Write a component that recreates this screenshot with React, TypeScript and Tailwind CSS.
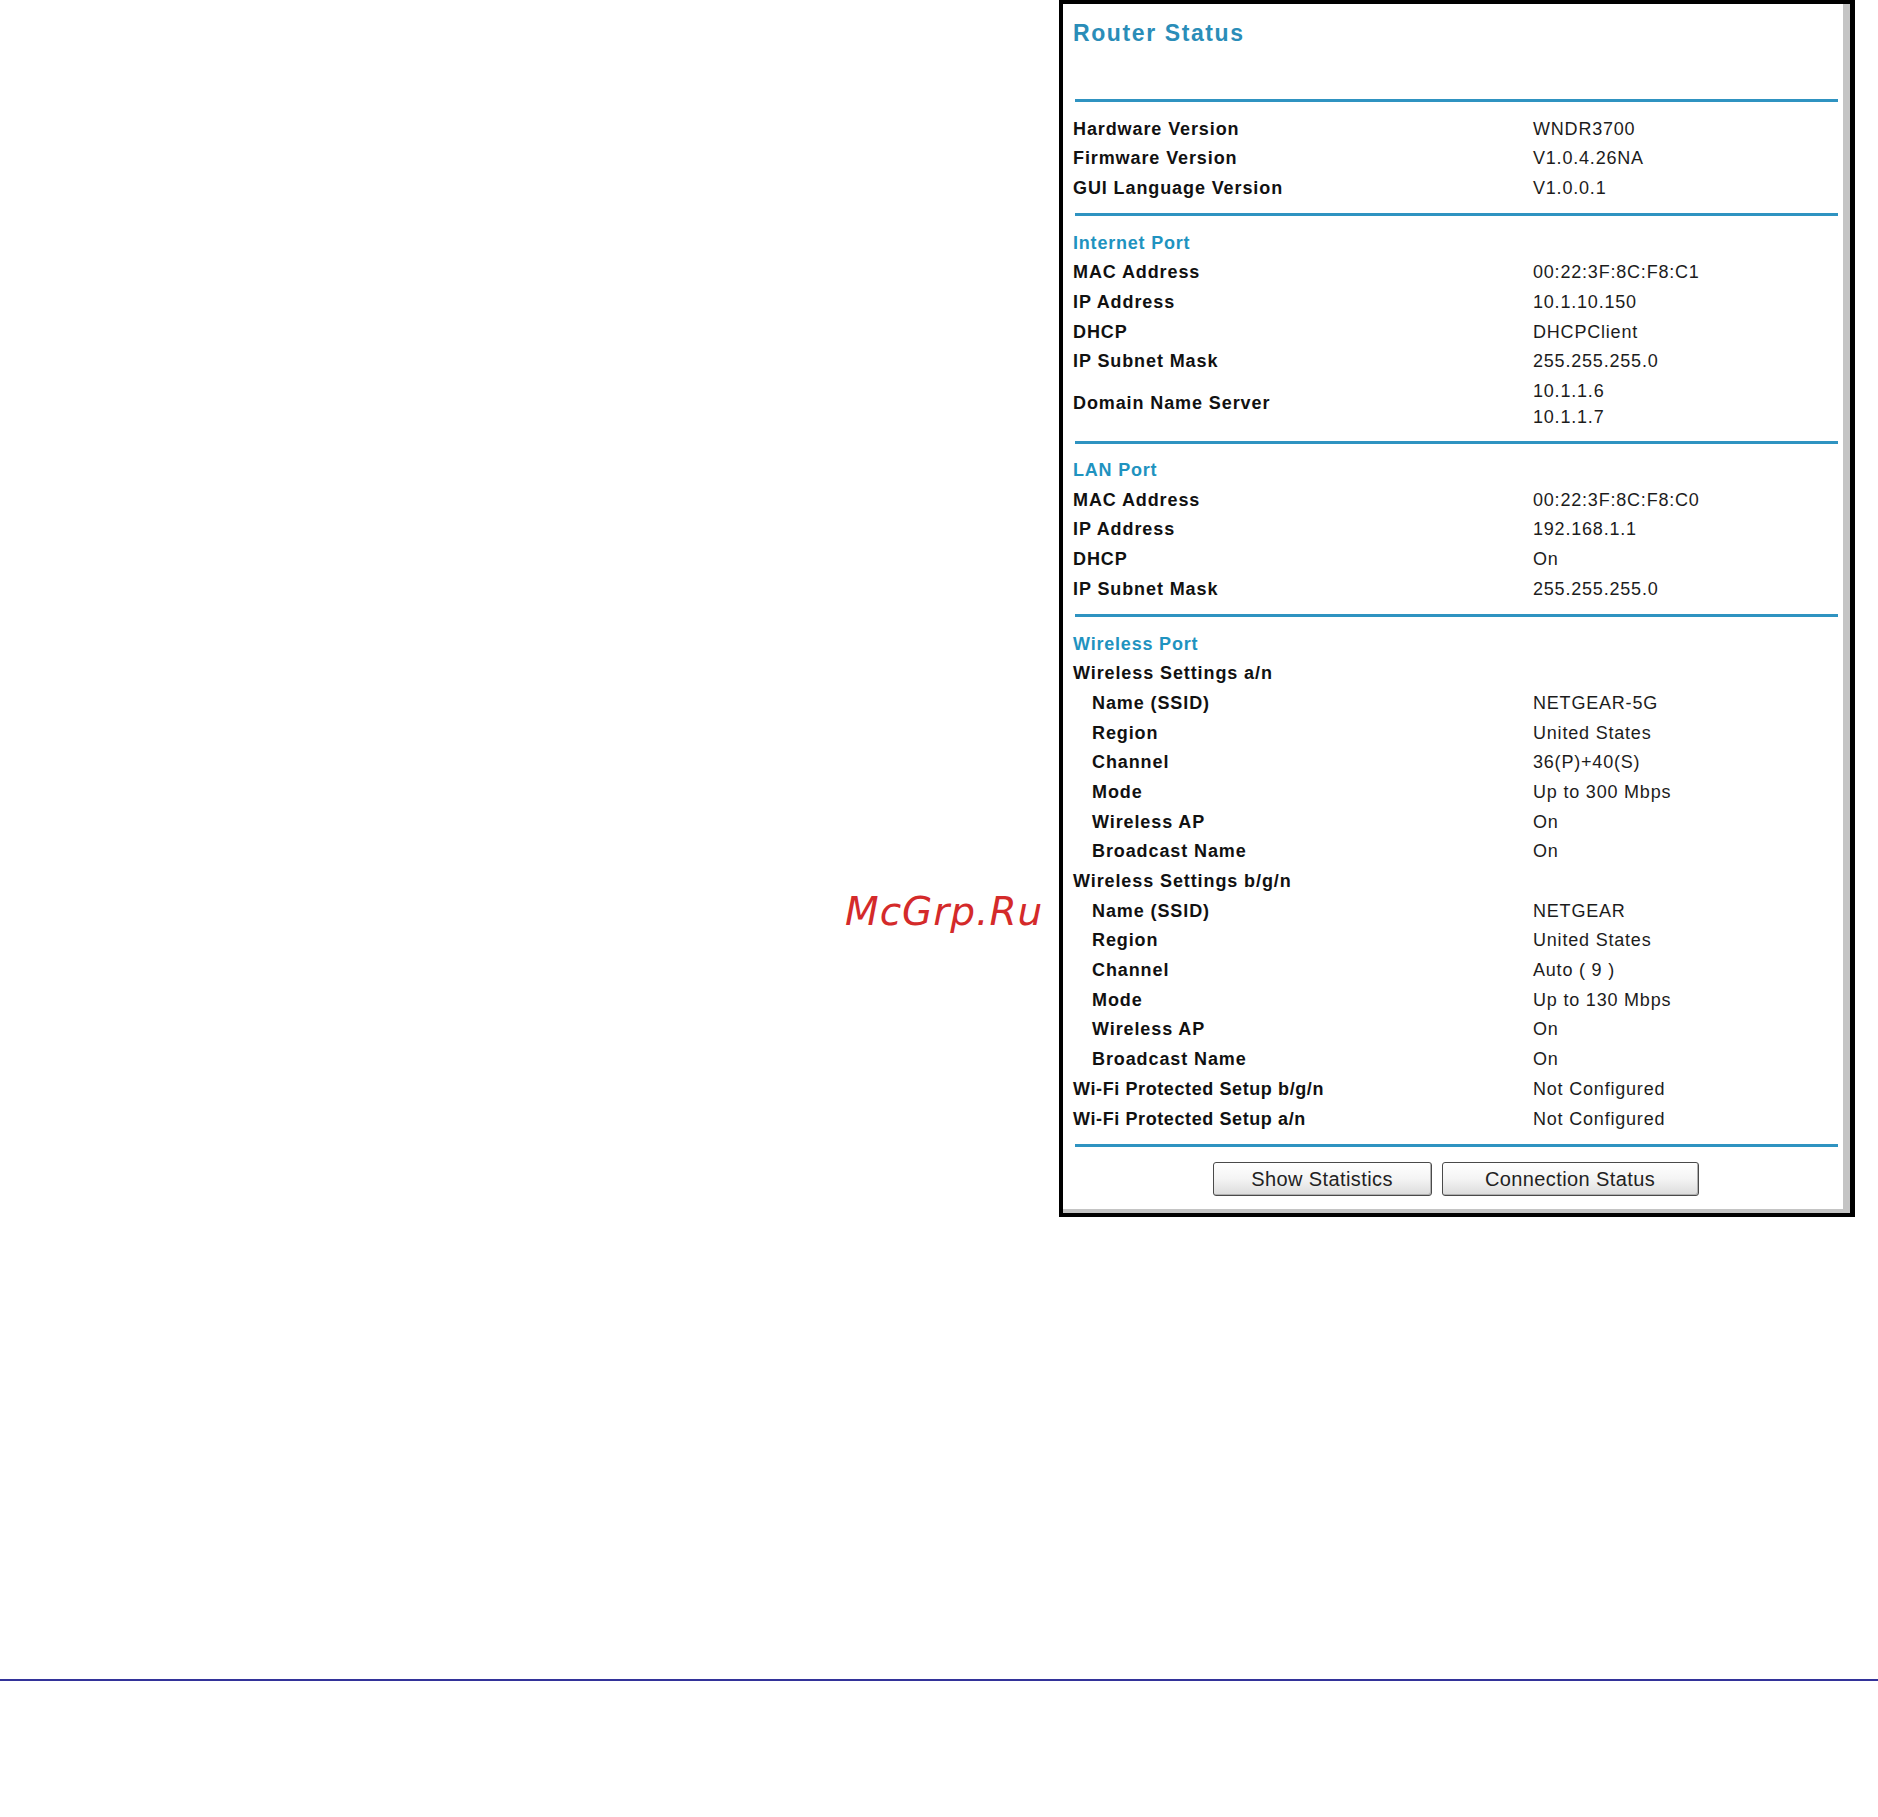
import React from "react";

type Row = {
  label: string;
  value?: string | string[];
  indent?: boolean;
  tight?: boolean;
};

type Section = {
  title?: string;
  rows: Row[];
};

const sections: Section[] = [
  {
    rows: [
      { label: "Hardware Version", value: "WNDR3700" },
      { label: "Firmware Version", value: "V1.0.4.26NA" },
      { label: "GUI Language Version", value: "V1.0.0.1" },
    ],
  },
  {
    title: "Internet Port",
    rows: [
      { label: "MAC Address", value: "00:22:3F:8C:F8:C1" },
      { label: "IP Address", value: "10.1.10.150" },
      { label: "DHCP", value: "DHCPClient" },
      { label: "IP Subnet Mask", value: "255.255.255.0" },
      { label: "Domain Name Server", value: ["10.1.1.6", "10.1.1.7"] },
    ],
  },
  {
    title: "LAN Port",
    rows: [
      { label: "MAC Address", value: "00:22:3F:8C:F8:C0" },
      { label: "IP Address", value: "192.168.1.1" },
      { label: "DHCP", value: "On" },
      { label: "IP Subnet Mask", value: "255.255.255.0" },
    ],
  },
  {
    title: "Wireless Port",
    rows: [
      { label: "Wireless Settings a/n" },
      { label: "Name (SSID)", value: "NETGEAR-5G", indent: true },
      { label: "Region", value: "United States", indent: true },
      { label: "Channel", value: "36(P)+40(S)", indent: true },
      { label: "Mode", value: "Up to 300 Mbps", indent: true },
      { label: "Wireless AP", value: "On", indent: true },
      { label: "Broadcast Name", value: "On", indent: true },
      { label: "Wireless Settings b/g/n" },
      { label: "Name (SSID)", value: "NETGEAR", indent: true },
      { label: "Region", value: "United States", indent: true },
      { label: "Channel", value: "Auto ( 9 )", indent: true },
      { label: "Mode", value: "Up to 130 Mbps", indent: true },
      { label: "Wireless AP", value: "On", indent: true },
      { label: "Broadcast Name", value: "On", indent: true },
      { label: "Wi-Fi Protected Setup b/g/n", value: "Not Configured", tight: true },
      { label: "Wi-Fi Protected Setup a/n", value: "Not Configured", tight: true },
    ],
  },
];

function Divider() {
  return <div className="h-[3px] ml-[2px] bg-[#2f93c1]" />;
}

function StatusRow({ row }: { row: Row }) {
  const multi = Array.isArray(row.value);
  return (
    <div className={`flex items-center ${multi ? "h-[54px]" : "h-[29.7px]"}`}>
      <div
        className={`w-[460px] shrink-0 font-bold text-[18px] leading-[21.5px] text-[#111] ${
          row.tight ? "tracking-[0.6px]" : "tracking-[0.9px]"
        } ${row.indent ? "pl-[19px]" : ""}`}
      >
        {row.label}
      </div>
      {row.value && (
        <div
          className={`text-[18px] tracking-[0.8px] text-[#1c1c1c] ${
            multi ? "leading-[26px]" : "leading-[21.5px]"
          }`}
        >
          {multi
            ? (row.value as string[]).map((v) => <div key={v}>{v}</div>)
            : row.value}
        </div>
      )}
    </div>
  );
}

function StatusButton({ label, width }: { label: string; width: string }) {
  return (
    <button
      className={`${width} h-[34px] rounded-[3px] border border-[#4a4a4a] bg-gradient-to-b from-[#ffffff] via-[#f4f4f4] to-[#dcdcdc] shadow-[inset_-1px_-1px_0_#b0b0b0] text-[20px] tracking-[0.4px] text-[#222]`}
    >
      {label}
    </button>
  );
}

export default function App() {
  return (
    <div className="relative w-[1878px] h-[1817px] bg-white font-['Liberation_Sans',Arial,sans-serif]">
      <div className="ml-[1059px] w-[796px] border-black border-t-4 border-l-4 border-b-4 border-r-[5px]">
        <div className="border-r-[7px] border-b-4 border-[#c4c4c4] bg-white">
          <div className="pl-[10px] pr-[5px]">
            {/* title bar */}
            <div className="h-[95px] pt-[16px]">
              <h1 className="text-[23px] font-bold tracking-[1.6px] text-[#2a8db8] leading-[26px]">
                Router Status
              </h1>
            </div>
            <Divider />
            {sections.map((section, i) => (
              <React.Fragment key={i}>
                <div className="pt-[12.5px] pb-[9.5px]">
                  {section.title && (
                    <div className="h-[29.7px] flex items-center font-bold text-[18px] leading-[21.5px] tracking-[0.8px] text-[#1f93c0]">
                      {section.title}
                    </div>
                  )}
                  {section.rows.map((row, j) => (
                    <StatusRow key={j} row={row} />
                  ))}
                </div>
                <Divider />
              </React.Fragment>
            ))}
            <div className="flex justify-center gap-[10px] pt-[15px] pb-[13px]">
              <StatusButton label="Show Statistics" width="w-[219px]" />
              <StatusButton label="Connection Status" width="w-[257px]" />
            </div>
          </div>
        </div>
      </div>

      {/* watermark */}
      <div className="absolute left-[845px] top-[892px] font-['DejaVu_Sans',sans-serif] italic text-[39px] leading-[39px] tracking-[1px] text-[#d42a2a]">
        McGrp.Ru
      </div>

      <div className="mt-[462px] h-[2px] bg-[#333399]" />
    </div>
  );
}
